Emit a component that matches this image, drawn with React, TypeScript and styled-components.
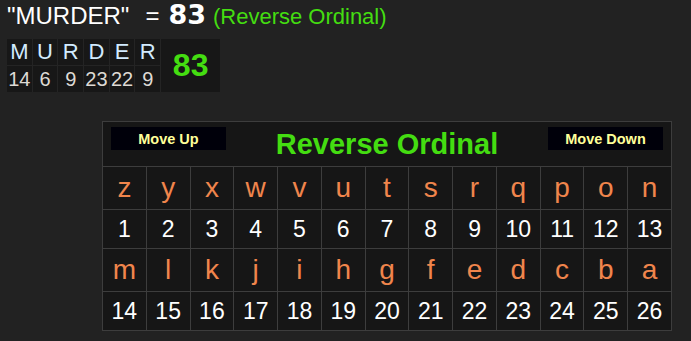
import styled, { createGlobalStyle } from 'styled-components'

const GlobalStyle = createGlobalStyle`
  html, body {
    margin: 0;
    padding: 0;
    background: #222222;
  }
  body {
    font-family: "Liberation Sans", Arial, sans-serif;
    color: #ffffff;
  }
`

const Page = styled.div`
  display: flex;
  flex-direction: column;
  align-items: flex-start;
  width: 691px;
  height: 341px;
  overflow: hidden;
  background: #222222;
`

const Heading = styled.div`
  display: flex;
  align-items: baseline;
  height: 31px;
  padding: 0 0 0 7px;
  line-height: 30px;
`

const Phrase = styled.span`
  font-size: 24px;
  color: #ffffff;
`

const Equals = styled.span`
  margin-left: 16px;
  font-size: 24px;
  color: #ffffff;
`

const Total = styled.span`
  margin-left: 9px;
  font-family: "DejaVu Sans", Verdana, sans-serif;
  font-size: 27px;
  font-weight: bold;
  color: #ffffff;
`

const CipherName = styled.span`
  margin-left: 7px;
  font-size: 22px;
  color: #44dd11;
`

const WordTable = styled.div`
  display: grid;
  grid-template-columns: repeat(6, 24.7px) 59px;
  grid-template-rows: 26px 26px;
  gap: 1px;
  margin: 8px 0 0 7px;
  background: #242424;
`

const WordCell = styled.div<{ $kind: 'letter' | 'value' }>`
  display: flex;
  align-items: center;
  justify-content: center;
  background: #171717;
  font-size: ${({ $kind }) => ($kind === 'letter' ? '22px' : '20px')};
  color: ${({ $kind }) => ($kind === 'letter' ? '#d2ebff' : '#dedad4')};
`

const WordSum = styled.div`
  grid-column: 7;
  grid-row: 1 / span 2;
  display: flex;
  align-items: center;
  justify-content: center;
  background: #171717;
  font-size: 32px;
  font-weight: bold;
  color: #44dd11;
`

const Chart = styled.div`
  display: grid;
  grid-template-columns: repeat(13, 1fr);
  grid-template-rows: 44px 42px 38px 42px 38px;
  gap: 1px;
  box-sizing: border-box;
  width: 570px;
  margin: 29px 0 0 102px;
  padding: 1px;
  background: #3d3d3d;
`

const ChartHeader = styled.div`
  grid-column: 1 / span 13;
  display: flex;
  align-items: flex-start;
  justify-content: space-between;
  padding: 5px 8px 0;
  background: #161616;
`

const ChartTitle = styled.div`
  align-self: center;
  margin-top: -4px;
  font-size: 29px;
  font-weight: bold;
  color: #44dd11;
`

const MoveButton = styled.button`
  width: 115px;
  height: 23px;
  padding: 0;
  border: none;
  background: #00000a;
  font-family: "Liberation Sans", Arial, sans-serif;
  font-size: 14.5px;
  font-weight: bold;
  color: #ffff99;
`

const ChartCell = styled.div<{ $kind: 'letter' | 'value' }>`
  display: flex;
  align-items: center;
  justify-content: center;
  background: #161616;
  font-size: ${({ $kind }) => ($kind === 'letter' ? '28px' : '23px')};
  color: ${({ $kind }) => ($kind === 'letter' ? '#f0854c' : '#ffffff')};
`

const WORD = 'MURDER'
const ALPHABET = 'abcdefghijklmnopqrstuvwxyz'

const reverseValue = (ch: string) => 26 - ALPHABET.indexOf(ch.toLowerCase())

function App() {
  const letters = WORD.split('')
  const values = letters.map(reverseValue)
  const sum = values.reduce((a, b) => a + b, 0)

  // reverse alphabet, 13 per row
  const reversed = ALPHABET.split('').reverse()
  const rows = [reversed.slice(0, 13), reversed.slice(13)]

  return (
    <>
      <GlobalStyle />
      <Page>
        <Heading>
          <Phrase>{`"${WORD}"`}</Phrase>
          <Equals>=</Equals>
          <Total>{sum}</Total>
          <CipherName>(Reverse Ordinal)</CipherName>
        </Heading>

        <WordTable>
          {letters.map((l, i) => (
            <WordCell key={`l${i}`} $kind="letter" style={{ gridColumn: i + 1, gridRow: 1 }}>
              {l}
            </WordCell>
          ))}
          {values.map((v, i) => (
            <WordCell key={`v${i}`} $kind="value" style={{ gridColumn: i + 1, gridRow: 2 }}>
              {v}
            </WordCell>
          ))}
          <WordSum>{sum}</WordSum>
        </WordTable>

        <Chart>
          <ChartHeader>
            <MoveButton type="button">Move Up</MoveButton>
            <ChartTitle>Reverse Ordinal</ChartTitle>
            <MoveButton type="button">Move Down</MoveButton>
          </ChartHeader>
          {rows.map((row) => [
            ...row.map((ch) => (
              <ChartCell key={`c${ch}`} $kind="letter">
                {ch}
              </ChartCell>
            )),
            ...row.map((ch) => (
              <ChartCell key={`n${ch}`} $kind="value">
                {reverseValue(ch)}
              </ChartCell>
            ))
          ])}
        </Chart>
      </Page>
    </>
  )
}

export default App
